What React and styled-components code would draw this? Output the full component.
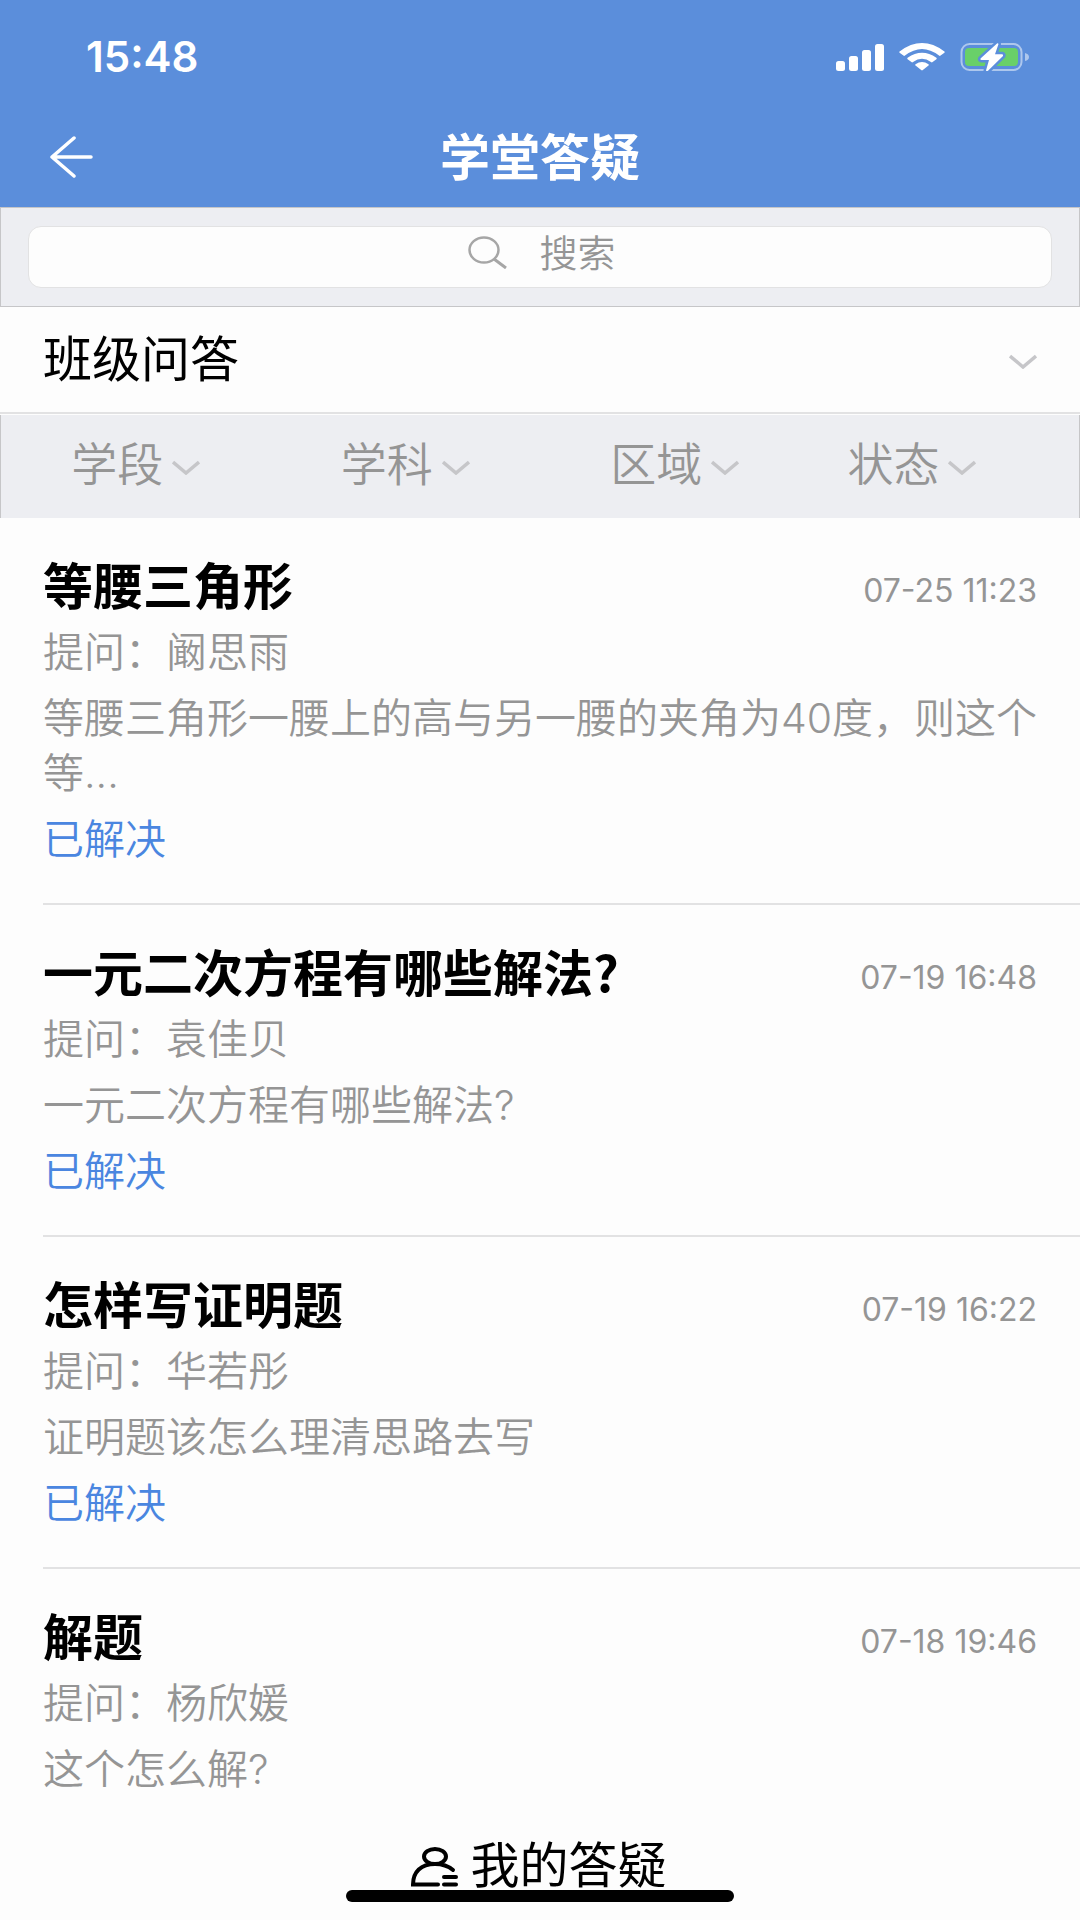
import React, { useState } from 'react'
import styled, { createGlobalStyle, ThemeProvider } from 'styled-components'

const theme = {
  fonts: {
    body: 'Inter, "Noto Sans CJK SC", sans-serif',
    cjk: '"Noto Sans CJK SC", sans-serif',
  },
  colors: {
    blue: '#5b8edb',
    link: '#4a86e0',
    black: '#000000',
    grey: '#959595',
    chevron: '#c6c6c9',
    bar: '#edeef2',
    line: '#e2e2e3',
    edge: '#c6c6c8',
    paper: '#fdfdfd',
    white: '#ffffff',
  },
}

const GlobalStyle = createGlobalStyle`
  * {
    box-sizing: border-box;
  }
  body {
    margin: 0;
    background: ${theme.colors.paper};
    font-family: ${theme.fonts.body};
  }
`

const questions = [
  {
    title: '等腰三角形',
    time: '07-25 11:23',
    asker: '阚思雨',
    body: '等腰三角形一腰上的高与另一腰的夹角为40度，则这个等...',
    status: '已解决',
  },
  {
    title: '一元二次方程有哪些解法?',
    time: '07-19 16:48',
    asker: '袁佳贝',
    body: '一元二次方程有哪些解法?',
    status: '已解决',
  },
  {
    title: '怎样写证明题',
    time: '07-19 16:22',
    asker: '华若彤',
    body: '证明题该怎么理清思路去写',
    status: '已解决',
  },
  {
    title: '解题',
    time: '07-18 19:46',
    asker: '杨欣媛',
    body: '这个怎么解?',
  },
]

const filters = ['学段', '学科', '区域', '状态']

const Page = styled.div`
  min-height: 100vh;
  display: flex;
  flex-direction: column;
`

const Header = styled.header`
  background: ${props => props.theme.colors.blue};
  color: ${props => props.theme.colors.white};
`

const StatusBar = styled.div`
  display: flex;
  align-items: center;
  justify-content: space-between;
  height: 107px;
  padding: 6px 50px 0 86px;
`

const Clock = styled.time`
  font-size: 42px;
  font-weight: 600;
`

const StatusIcons = styled.div`
  display: flex;
  align-items: center;
  gap: 15px;
`

const NavBar = styled.div`
  display: grid;
  grid-template-columns: 100px 1fr 100px;
  align-items: center;
  height: 100px;
`

const BackButton = styled.button`
  display: flex;
  padding: 0 0 0 49px;
  border: 0;
  background: none;
  color: inherit;
`

const PageTitle = styled.h1`
  margin: 0;
  padding-bottom: 6px;
  font-family: ${props => props.theme.fonts.cjk};
  font-size: 50px;
  line-height: 60px;
  font-weight: 700;
  text-align: center;
`

const SearchBar = styled.div`
  padding: 18px 27px;
  background: ${props => props.theme.colors.bar};
  border: 1px solid ${props => props.theme.colors.edge};
`

const SearchBox = styled.label`
  display: flex;
  align-items: center;
  justify-content: center;
  gap: 32px;
  height: 62px;
  padding: 0 0 9px 4px;
  border: 1px solid ${props => props.theme.colors.line};
  border-radius: 13px;
  background: ${props => props.theme.colors.paper};
`

const SearchInput = styled.input`
  field-sizing: content;
  height: 50px;
  padding: 0 0 4px;
  border: 0;
  outline: 0;
  background: none;
  font-family: ${props => props.theme.fonts.cjk};
  font-size: 38px;
  font-weight: 350;
  color: ${props => props.theme.colors.grey};
  &::placeholder {
    color: ${props => props.theme.colors.grey};
    opacity: 1;
  }
`

const Select = styled.select`
  appearance: none;
  field-sizing: content;
  padding: 0 0 5px;
  border: 0;
  outline: 0;
  background: none;
  font-family: ${props => props.theme.fonts.cjk};
  font-size: 46px;
  line-height: 60px;
  font-weight: 350;
  color: ${props => props.theme.colors.grey};
`

const GroupRow = styled.div`
  display: flex;
  align-items: center;
  height: 107px;
  padding: 0 43px 4px;
  border-bottom: 2px solid ${props => props.theme.colors.line};
`

const GroupSelect = styled(Select)`
  flex: 1;
  padding-bottom: 3px;
  font-size: 49px;
  font-weight: 400;
  color: ${props => props.theme.colors.black};
`

const FilterBar = styled.div`
  display: grid;
  grid-template-columns: repeat(3, 25%) 19%;
  align-items: center;
  height: 103px;
  margin-top: 1px;
  padding-bottom: 6px;
  background: ${props => props.theme.colors.bar};
  border: solid ${props => props.theme.colors.edge};
  border-width: 0 1px;
`

const Filter = styled.div`
  display: flex;
  align-items: center;
  justify-content: center;
  gap: 9px;
`

const ChevronIcon = styled.svg`
  flex: none;
  width: 28px;
  height: 15px;
  margin-top: 8px;
  pointer-events: none;
`

const List = styled.ul`
  flex: 1;
  margin: 0;
  padding: 0 0 0 43px;
  list-style: none;
`

const Item = styled.li`
  display: flex;
  flex-direction: column;
  gap: 11px;
  padding: 35px 38px 36px 0;
  border-bottom: 2px solid ${props => props.theme.colors.line};
  &:last-child {
    border-bottom: 0;
  }
`

const ItemHead = styled.div`
  display: flex;
  align-items: center;
  justify-content: space-between;
  padding: 0 5px 1px 0;
`

const ItemTitle = styled.h2`
  margin: 0;
  font-family: ${props => props.theme.fonts.cjk};
  font-size: 50px;
  line-height: 60px;
  font-weight: 700;
  color: ${props => props.theme.colors.black};
`

const ItemTime = styled.time`
  padding-top: 16px;
  font-size: 32px;
  line-height: 36px;
  color: ${props => props.theme.colors.grey};
`

const ItemText = styled.p`
  margin: 0;
  font-family: ${props => props.theme.fonts.body};
  font-size: 41px;
  line-height: 55px;
  font-weight: 350;
  color: ${props => props.solved ? props.theme.colors.link : props.theme.colors.grey};
`

const Footer = styled.footer`
  display: flex;
  flex-direction: column;
  align-items: center;
  padding-bottom: 18px;
`

const MineButton = styled.button`
  display: flex;
  align-items: center;
  gap: 11px;
  height: 57px;
  padding: 0 2px 0 0;
  border: 0;
  background: none;
  font-family: ${props => props.theme.fonts.cjk};
  font-size: 49px;
  line-height: 57px;
  color: ${props => props.theme.colors.black};
`

const MineIcon = styled.svg`
  width: 48px;
  height: 40px;
  margin-top: 10px;
`

const HomeIndicator = styled.div`
  width: 36%;
  height: 12px;
  border-radius: 6px;
  background: ${props => props.theme.colors.black};
`

function Chevron() {
  return (
    <ChevronIcon viewBox="0 0 28 15" aria-hidden="true">
      <path d="M1 2 14 13 27 2" fill="none" stroke={theme.colors.chevron} strokeWidth="3.5" />
    </ChevronIcon>
  )
}

function Signal() {
  return (
    <svg width="48" height="28" viewBox="0 0 48 28" fill="#fff" aria-hidden="true">
      <rect x="0" y="18" width="9" height="10" rx="2.5" />
      <rect x="13" y="13" width="9" height="15" rx="2.5" />
      <rect x="26" y="7" width="9" height="21" rx="2.5" />
      <rect x="39" y="1" width="9" height="27" rx="2.5" />
    </svg>
  )
}

function Wifi() {
  return (
    <svg width="46" height="28" viewBox="0 0 46 28" fill="#fff" aria-hidden="true">
      <path d="M.6 8.4Q23-8.4 45.4 8.4q.8.7 0 1.4l-3.8 2.8q-.8.6-1.6 0Q23-.5 6 12.6q-.8.6-1.6 0L.6 9.8q-.8-.7 0-1.4Z" />
      <path d="M8.6 14.8Q23 4.8 37.4 14.8q.8.7 0 1.4l-3.8 2.9q-.8.6-1.6 0Q23 12.5 14 19.1q-.8.6-1.6 0l-3.8-2.9q-.8-.7 0-1.4Z" />
      <path d="M16.5 21.3q6.5-4.6 13 0 .8.6 0 1.3l-5.7 4.5q-.8.7-1.6 0l-5.7-4.5q-.8-.7 0-1.3Z" />
    </svg>
  )
}

function Battery() {
  const bolt = 'M37 1.5 20.5 16.5q-.5 1.5 1 1.5H29L26 28.5q.5 1 2 .3L43 14q.6-1.6-1-1.8H35L38.5 2Q38 .8 37 1.5Z'
  return (
    <svg width="70" height="30" viewBox="0 0 70 30" aria-hidden="true">
      <rect x="1.5" y="2" width="60" height="26" rx="8" fill="none" stroke="#fff" strokeOpacity=".5" strokeWidth="2" />
      <path d="M65 11q4 1 4 4t-4 4Z" fill="#fff" fillOpacity=".5" />
      <rect x="5" y="6" width="53" height="18" rx="4" fill="#69d069" />
      <path d={bolt} fill="#fff" stroke={theme.colors.blue} strokeWidth="5" strokeLinejoin="round" />
      <path d={bolt} fill="#fff" />
    </svg>
  )
}

function Question({ question }) {
  return (
    <Item>
      <ItemHead>
        <ItemTitle>{question.title}</ItemTitle>
        <ItemTime>{question.time}</ItemTime>
      </ItemHead>
      <ItemText>提问：{question.asker}</ItemText>
      <ItemText>{question.body}</ItemText>
      {question.status && <ItemText solved>{question.status}</ItemText>}
    </Item>
  )
}

export default function App() {
  const [keyword, setKeyword] = useState('')

  return (
    <ThemeProvider theme={theme}>
      <GlobalStyle />
      <Page>
        <Header>
          <StatusBar>
            <Clock>15:48</Clock>
            <StatusIcons>
              <Signal />
              <Wifi />
              <Battery />
            </StatusIcons>
          </StatusBar>
          <NavBar>
            <BackButton type="button" aria-label="返回">
              <svg width="44" height="42" viewBox="0 0 44 42" fill="none" stroke="#fff" strokeWidth="3.5" strokeLinecap="round" strokeLinejoin="round">
                <path d="M25 2 3 21 25 40M3 21H42" />
              </svg>
            </BackButton>
            <PageTitle>学堂答疑</PageTitle>
          </NavBar>
        </Header>
        <SearchBar>
          <SearchBox>
            <svg width="39" height="33" viewBox="0 0 39 33" fill="none" stroke="#a6a6a6" strokeWidth="2.5" aria-hidden="true">
              <ellipse cx="16" cy="14" rx="14.5" ry="12.5" />
              <path d="M26 23 38 32" strokeWidth="3" />
            </svg>
            <SearchInput
              type="text"
              placeholder="搜索"
              aria-label="搜索"
              value={keyword}
              onChange={e => setKeyword(e.target.value)}
            />
          </SearchBox>
        </SearchBar>
        <GroupRow>
          <GroupSelect aria-label="问答分组">
            <option>班级问答</option>
          </GroupSelect>
          <Chevron />
        </GroupRow>
        <FilterBar>
          {filters.map(name => (
            <Filter key={name}>
              <Select aria-label={name}>
                <option>{name}</option>
              </Select>
              <Chevron />
            </Filter>
          ))}
        </FilterBar>
        <List>
          {questions.map(question => (
            <Question key={question.title} question={question} />
          ))}
        </List>
        <Footer>
          <MineButton type="button">
            <MineIcon viewBox="0 0 48 40" fill="none" stroke="#000" strokeWidth="4" strokeLinecap="round" aria-hidden="true">
              <ellipse cx="24" cy="9.5" rx="11" ry="7.5" />
              <path d="M42 23C36 18 31 17 24 17 10 17 2 25 2 37.5H27M33 30H45M33 37.5H45" />
            </MineIcon>
            我的答疑
          </MineButton>
          <HomeIndicator />
        </Footer>
      </Page>
    </ThemeProvider>
  )
}
